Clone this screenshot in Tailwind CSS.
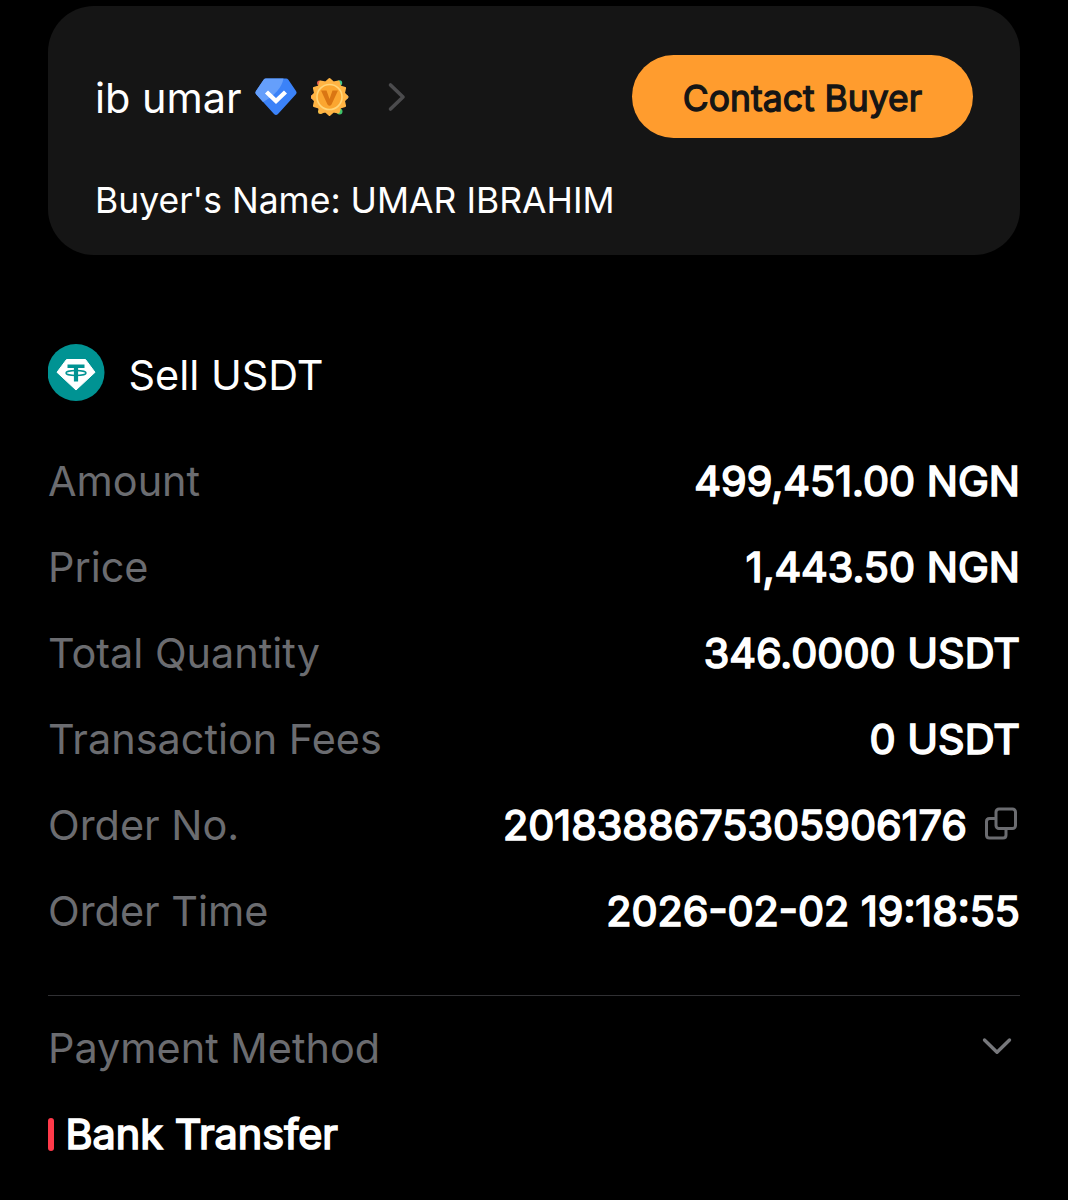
<!DOCTYPE html>
<html lang="en">
<head>
    <meta charset="UTF-8">
    <meta name="viewport" content="width=device-width, initial-scale=1.0">
    <title>Order Details</title>
    <script src="https://cdn.jsdelivr.net/npm/@tailwindcss/browser@4"></script>
</head>
<body class="bg-black text-white font-['Inter',sans-serif] h-[1200px] overflow-hidden">
    <div class="px-12 pt-[6px]">

        <!-- Buyer card -->
        <div class="bg-[#151515] rounded-[46px] h-[249px] px-[47px] pt-[49px]">
            <div class="flex items-center justify-between">
                <div class="flex items-center">
                    <span class="text-[41.4px] leading-[50px] relative top-px w-[146px] whitespace-nowrap">ib umar</span>
                    <svg class="w-[42px] h-[38px] ml-[14px]" viewBox="0 0 42 38">
                        <path d="M11 0.5h20q1.5 0 2.4 1.2l7.6 11.2q1.3 2-.3 3.6L23 36q-2 2-4 0L1.3 16.5q-1.6-1.6-.3-3.6L8.6 1.7Q9.5.5 11 .5z" fill="#3b82f8"/>
                        <path d="M11 .5h17.500Q26 14 8 24L1.3 16.5q-1.6-1.6-.3-3.6L8.6 1.7Q9.5.5 11 .5z" fill="#659ffb"/>
                        <path d="M11.500 14l9.500 9 9.500-9" fill="none" stroke="#fff" stroke-width="4.4"/>
                    </svg>
                    <svg class="w-[38px] h-[40px] ml-[14px]" viewBox="-18.500 -20 38 40">
                        <circle cx="-10" cy="-14" r="2.5" fill="#e8604c"/>
                        <circle cx="10" cy="-14" r="2.7" fill="#45c98a"/>
                        <circle cx="-16.5" cy="0" r="2.3" fill="#b06be0"/>
                        <circle cx="16.5" cy="0" r="2.3" fill="#5b9df0"/>
                        <circle cx="10" cy="14.5" r="3" fill="#3fc46b"/>
                        <circle cx="-9" cy="14.5" r="2.5" fill="#efc24a"/>
                        <path id="sun" d="" fill="#ffb444" stroke="#ffb444" stroke-width="2" stroke-linejoin="round"/>
                        <circle r="12.500" fill="#fba630" stroke="#ffd578" stroke-width="1.6"/>
                        <path d="M-8.500-6.500h5.500L0 2l3-8.500h5.500L2 7.500q-2 2.400-4 0z" fill="#da7613"/>
                    </svg>
                    <svg class="w-5 h-[30px] ml-[38px]" viewBox="0 0 20 30" fill="none" stroke="#4b4b4d" stroke-width="3.6" stroke-linecap="round" stroke-linejoin="round">
                        <path d="M3.500 3L16 15 3.500 27"/>
                    </svg>
                </div>
                <div class="bg-[#ff9c2e] text-[#151515] rounded-full w-[341px] h-[83px] flex items-center justify-center">
                    <span class="text-[35.5px] relative top-[2px] [-webkit-text-stroke:1.3px_#151515]">Contact Buyer</span>
                </div>
            </div>
            <p class="text-[35.5px] leading-[44px] mt-[41px]">Buyer's Name: UMAR IBRAHIM</p>
        </div>

        <!-- Coin title -->
        <div class="flex items-center h-[57px] mt-[89px]">
            <svg class="w-[57px] h-[57px]" viewBox="0 0 57 57">
                <circle cx="28" cy="28.5" r="28.5" fill="#009393"/>
                <path d="M18.500 15.500h19L47 28.300 28 46 9 28.300z" fill="#fff" stroke="#fff" stroke-width="1" stroke-linejoin="round"/>
                <path d="M19.500 20.500h17V24h-6.400v13.500h-4.200V24h-6.400z" fill="#009393"/>
                <ellipse cx="28" cy="29" rx="10" ry="2.500" fill="none" stroke="#009393" stroke-width="1.500"/>
            </svg>
            <span class="text-[41.4px] ml-[23.5px] relative top-[3px]">Sell USDT</span>
        </div>

        <!-- Order rows -->
        <div class="mt-[37px] text-[41.4px] leading-[50px]">
            <div class="flex items-center justify-between h-[86px]">
                <span class="text-[#6b6c70]">Amount</span>
                <span class="[-webkit-text-stroke:1.7px_#fff]">499,451.00 NGN</span>
            </div>
            <div class="flex items-center justify-between h-[86px]">
                <span class="text-[#6b6c70]">Price</span>
                <span class="[-webkit-text-stroke:1.7px_#fff]">1,443.50 NGN</span>
            </div>
            <div class="flex items-center justify-between h-[86px]">
                <span class="text-[#6b6c70]">Total Quantity</span>
                <span class="[-webkit-text-stroke:1.7px_#fff]">346.0000 USDT</span>
            </div>
            <div class="flex items-center justify-between h-[86px]">
                <span class="text-[#6b6c70]">Transaction Fees</span>
                <span class="[-webkit-text-stroke:1.7px_#fff]">0 USDT</span>
            </div>
            <div class="flex items-center justify-between h-[86px]">
                <span class="text-[#6b6c70]">Order No.</span>
                <div class="flex items-center">
                    <span class="[-webkit-text-stroke:1.7px_#fff]">2018388675305906176</span>
                    <svg class="w-[34px] h-[34px] ml-[17px] mr-[2px] -mt-[3px]" viewBox="0 0 34 34" fill="none" stroke="#6b6c70" stroke-width="3">
                        <path d="M12 11.500H5.500q-3 0-3 3V28q0 3 3 3H19q3 0 3-3v-6"/>
                        <rect x="12" y="2" width="19.500" height="19.500" rx="3"/>
                    </svg>
                </div>
            </div>
            <div class="flex items-center justify-between h-[86px]">
                <span class="text-[#6b6c70]">Order Time</span>
                <span class="[-webkit-text-stroke:1.7px_#fff]">2026-02-02 19:18:55</span>
            </div>
        </div>

        <div class="h-px bg-[#303033] mt-[41px]"></div>

        <!-- Payment method -->
        <div class="text-[41.4px] leading-[50px] mt-[9px]">
            <div class="flex items-center justify-between h-[86px]">
                <span class="text-[#6b6c70]">Payment Method</span>
                <svg class="w-8 h-5 mr-[7px] -mt-[5px]" viewBox="0 0 32 20" fill="none" stroke="#77787c" stroke-width="3.4" stroke-linecap="round" stroke-linejoin="round">
                    <path d="M3.500 4L16 16.300 28.500 4"/>
                </svg>
            </div>
            <div class="flex items-center h-[86px]">
                <div class="w-[6px] h-[33px] rounded-full bg-[#ff3a4a]"></div>
                <span class="ml-[11.5px] [-webkit-text-stroke:1.7px_#fff]">Bank Transfer</span>
            </div>
        </div>
    </div>

    <script>
        // 12-point badge outline
        const points = [];
        for (let i = 0; i < 24; i++) {
            const r = i % 2 === 0 ? 18 : 15;
            const a = (i * 15 - 90) * Math.PI / 180;
            points.push(`${(r * Math.cos(a)).toFixed(2)} ${(r * Math.sin(a)).toFixed(2)}`);
        }
        document.getElementById('sun').setAttribute('d', 'M' + points.join('L') + 'z');
    </script>
</body>
</html>
